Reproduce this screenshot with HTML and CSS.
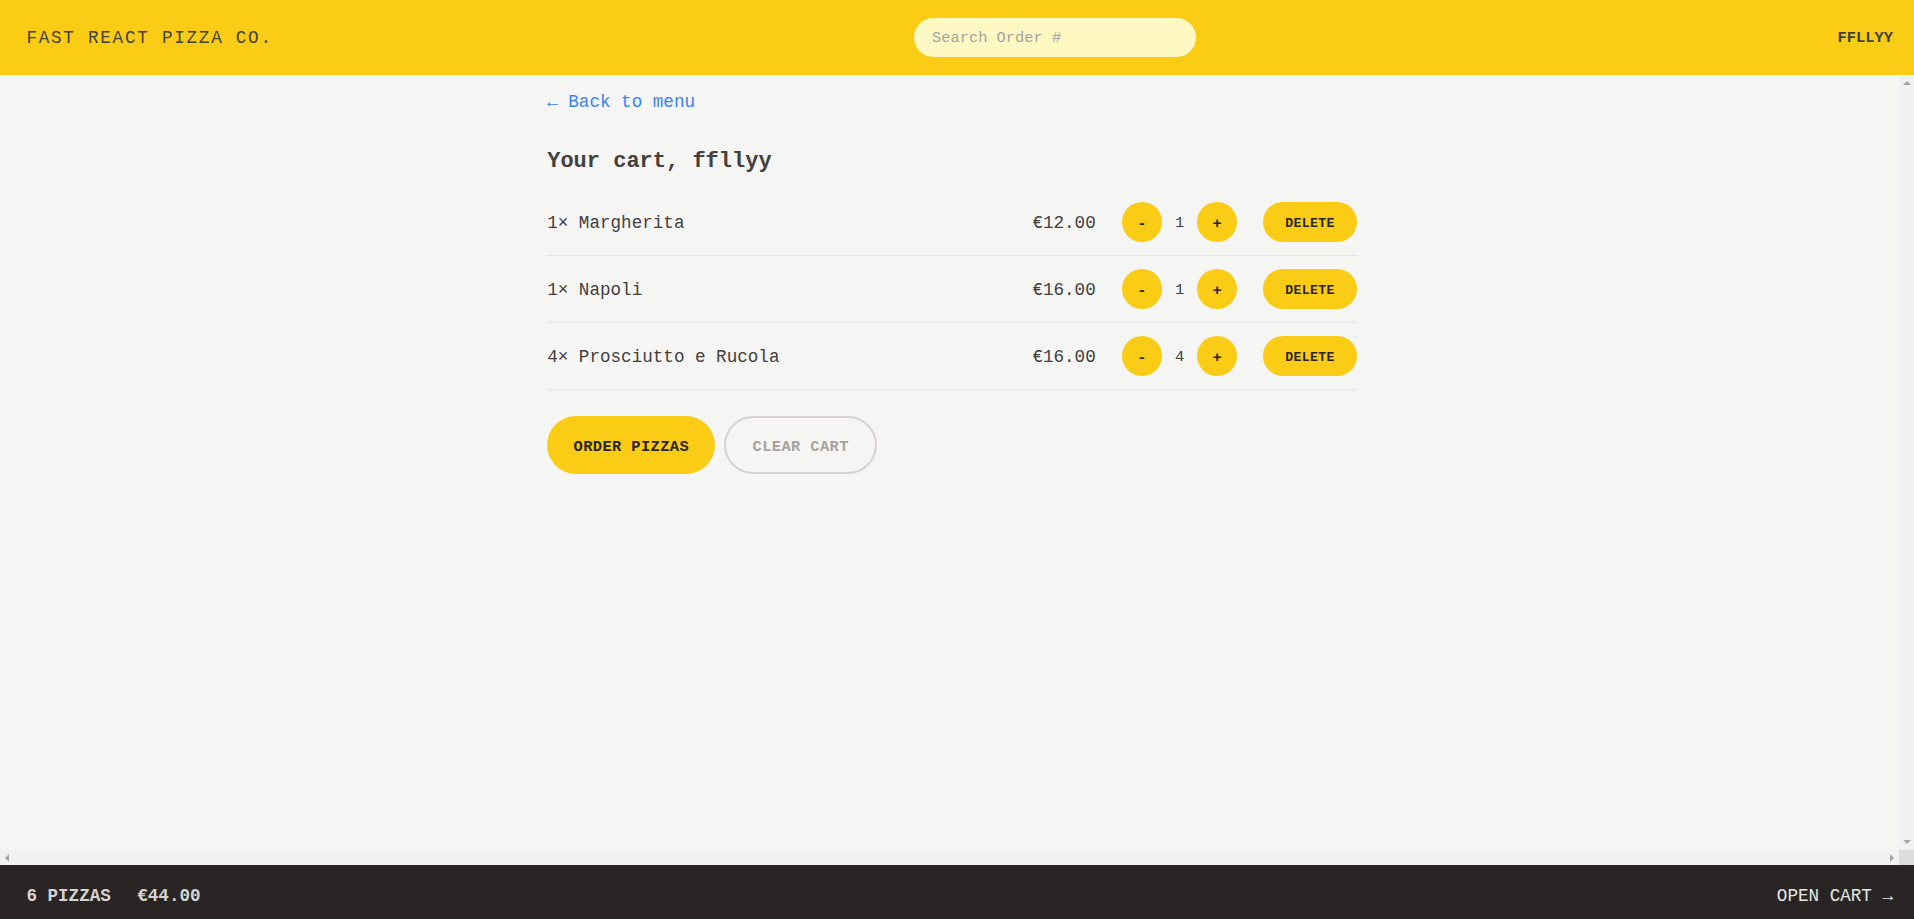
FILE: index.html
```html
<!DOCTYPE html>
<html lang="en">
<head>
<meta charset="utf-8">
<title>Fast React Pizza Co.</title>
<link rel="stylesheet" href="styles.css">
</head>
<body>
<div class="app">
  <header class="header">
    <a class="logo" href="#">Fast React Pizza Co.</a>
    <form class="search-form">
      <input class="search" type="text" placeholder="Search Order #">
    </form>
    <div class="username">ffllyy</div>
  </header>

  <div class="viewport">
    <div class="main-scroll">
      <main class="container">
        <div class="cart">
          <div class="back-row"><a class="back-link" href="#">&larr; Back to menu</a></div>
          <h2 class="cart-title">Your cart, ffllyy</h2>
          <ul class="cart-list">
            <li class="cart-item">
              <p class="item-name">1&times; Margherita</p>
              <div class="item-controls">
                <p class="item-price">€12.00</p>
                <div class="qty">
                  <button class="btn-round">-</button>
                  <span class="qty-num">1</span>
                  <button class="btn-round">+</button>
                </div>
                <button class="btn-small">Delete</button>
              </div>
            </li>
            <li class="cart-item">
              <p class="item-name">1&times; Napoli</p>
              <div class="item-controls">
                <p class="item-price">€16.00</p>
                <div class="qty">
                  <button class="btn-round">-</button>
                  <span class="qty-num">1</span>
                  <button class="btn-round">+</button>
                </div>
                <button class="btn-small">Delete</button>
              </div>
            </li>
            <li class="cart-item">
              <p class="item-name">4&times; Prosciutto e Rucola</p>
              <div class="item-controls">
                <p class="item-price">€16.00</p>
                <div class="qty">
                  <button class="btn-round">-</button>
                  <span class="qty-num">4</span>
                  <button class="btn-round">+</button>
                </div>
                <button class="btn-small">Delete</button>
              </div>
            </li>
          </ul>
          <div class="cart-actions">
            <a class="btn-primary" href="#">Order pizzas</a>
            <button class="btn-secondary">Clear cart</button>
          </div>
        </div>
      </main>
    </div>
    <div class="vbar"><span class="arrow arrow-up"></span><span class="arrow arrow-down"></span></div>
    <div class="hbar"><span class="arrow arrow-left"></span><span class="arrow arrow-right"></span></div>
    <div class="corner"></div>
  </div>

  <footer class="footer">
    <p class="summary"><span>6 pizzas</span><span>€44.00</span></p>
    <a class="open-cart" href="#">Open cart &rarr;</a>
  </footer>
</div>
</body>
</html>
```
FILE: styles.css
```css
* { box-sizing: border-box; }

html, body {
  margin: 0;
  padding: 0;
  height: 100%;
}

body {
  font-family: "Liberation Mono", "DejaVu Sans Mono", monospace;
  background: #f5f5f4;
  color: #44403c;
  overflow: hidden;
}

p { margin: 0; }
a { text-decoration: none; color: inherit; }

.app {
  display: grid;
  grid-template-rows: auto 1fr auto;
  height: 100vh;
}

/* Header */
.header {
  display: flex;
  align-items: center;
  justify-content: space-between;
  background: #facc15;
  padding: 17.6px 21px 17.6px 26.4px;
}

.logo {
  font-size: 17.6px;
  line-height: 26.4px;
  padding-top: 2px;
  letter-spacing: 0.1em;
  text-transform: uppercase;
  color: #44403c;
}

.search-form { margin: 0; display: flex; }

.search {
  width: 281.6px;
  height: 39.6px;
  border: none;
  border-radius: 9999px;
  background: #fef9c3;
  padding: 1px 17.6px 0;
  font-family: inherit;
  font-size: 15.4px;
  line-height: 22px;
  color: #44403c;
  outline: none;
}

.search::placeholder { color: #a8a29e; }

.username {
  font-size: 15.4px;
  line-height: 22px;
  padding-top: 2px;
  font-weight: 700;
  text-transform: uppercase;
  color: #44403c;
}

/* Main area with classic scrollbars */
.viewport {
  display: grid;
  grid-template-columns: 1fr 15px;
  grid-template-rows: 1fr 15px;
  min-height: 0;
}

.main-scroll {
  overflow: hidden;
  min-height: 0;
  padding-left: 5px;
}

.vbar {
  display: flex;
  flex-direction: column;
  justify-content: space-between;
  align-items: center;
  background: #f1f1f1;
  padding: 6px 0;
}

.hbar {
  display: flex;
  justify-content: space-between;
  align-items: center;
  background: #f1f1f1;
  padding: 0 5px;
}

.corner { background: #dcdcdc; }

.arrow {
  display: block;
  width: 0;
  height: 0;
}

.arrow-up {
  border-left: 4px solid transparent;
  border-right: 4px solid transparent;
  border-bottom: 4px solid #a3a3a3;
}

.arrow-down {
  border-left: 4px solid transparent;
  border-right: 4px solid transparent;
  border-top: 4px solid #a3a3a3;
}

.arrow-left {
  border-top: 4px solid transparent;
  border-bottom: 4px solid transparent;
  border-right: 4px solid #a3a3a3;
}

.arrow-right {
  border-top: 4px solid transparent;
  border-bottom: 4px solid transparent;
  border-left: 4px solid #a3a3a3;
}

.container {
  max-width: 844.8px;
  margin: 0 auto;
}

.cart {
  padding: 13.2px 17.6px;
}

.back-row {
  font-size: 17.6px;
  line-height: 26.4px;
  padding-top: 1px;
}

.back-link { color: #3b82f6; }

.cart-title {
  margin: 29.8px 0 0;
  padding-top: 1.5px;
  font-size: 22px;
  line-height: 30.8px;
  font-weight: 700;
  color: #44403c;
}

.cart-list {
  list-style: none;
  margin: 11.7px 0 0;
  padding: 0;
  border-bottom: 1px solid #e7e5e4;
}

.cart-item {
  display: flex;
  align-items: center;
  justify-content: space-between;
  padding: 13.2px 0;
}

.cart-item + .cart-item { border-top: 1px solid #e7e5e4; }

.item-name {
  font-size: 17.6px;
  line-height: 26.4px;
  padding-top: 2px;
}

.item-controls {
  display: flex;
  align-items: center;
  gap: 26.4px;
}

.item-price {
  font-size: 17.6px;
  line-height: 26.4px;
  padding-top: 2px;
}

.qty {
  display: flex;
  align-items: center;
  gap: 13.2px;
}

.qty-num {
  font-size: 15.4px;
  line-height: 22px;
  padding-top: 2px;
  font-weight: 400;
}

button { font-family: inherit; cursor: pointer; }

.btn-round {
  width: 39.6px;
  height: 39.6px;
  border: none;
  border-radius: 9999px;
  background: #facc15;
  color: #292524;
  font-size: 15.4px;
  line-height: 22px;
  font-weight: 700;
  padding: 4px 0 0;
}

.btn-small {
  height: 39.6px;
  border: none;
  border-radius: 9999px;
  background: #facc15;
  color: #292524;
  padding: 3px 22px 0;
  font-size: 13.2px;
  line-height: 17.6px;
  font-weight: 700;
  letter-spacing: 0.025em;
  text-transform: uppercase;
}

.cart-actions {
  display: flex;
  gap: 8.8px;
  margin-top: 26.4px;
}

.btn-primary {
  display: inline-block;
  background: #facc15;
  color: #292524;
  border-radius: 9999px;
  padding: 19.6px 26.4px 15.6px;
  font-size: 15.4px;
  line-height: 22px;
  font-weight: 700;
  letter-spacing: 0.025em;
  text-transform: uppercase;
}

.btn-secondary {
  background: transparent;
  border: 2.2px solid #d6d3d1;
  border-radius: 9999px;
  color: #a8a29e;
  padding: 17.4px 26.4px 13.4px;
  font-size: 15.4px;
  line-height: 22px;
  font-weight: 700;
  letter-spacing: 0.025em;
  text-transform: uppercase;
}

/* Footer */
.footer {
  display: flex;
  align-items: flex-start;
  justify-content: space-between;
  background: #292524;
  color: #e7e5e4;
  padding: 18px 21px 9.6px 26.4px;
  font-size: 17.6px;
  line-height: 26.4px;
  text-transform: uppercase;
}

.summary {
  display: flex;
  gap: 26.4px;
  font-weight: 700;
  color: #d6d3d1;
}

.open-cart { color: #e7e5e4; }
```
